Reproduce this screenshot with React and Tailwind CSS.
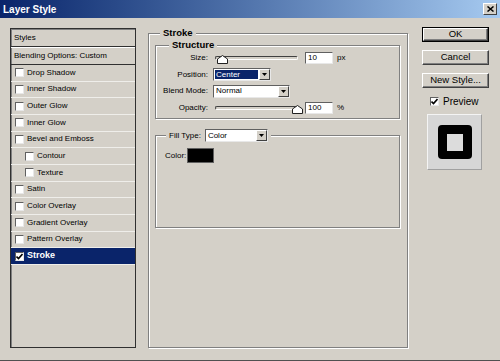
import React from 'react';

// Photoshop "Layer Style" dialog, Win2000 chrome

const STYLE_ROWS = [
    { name: 'Drop Shadow', level: 1 },
    { name: 'Inner Shadow', level: 1 },
    { name: 'Outer Glow', level: 1 },
    { name: 'Inner Glow', level: 1 },
    { name: 'Bevel and Emboss', level: 1 },
    { name: 'Contour', level: 2 },
    { name: 'Texture', level: 2 },
    { name: 'Satin', level: 1 },
    { name: 'Color Overlay', level: 1 },
    { name: 'Gradient Overlay', level: 1 },
    { name: 'Pattern Overlay', level: 1 },
    { name: 'Stroke', level: 1, checked: true, selected: true },
];

const Check = ({ checked }) => (
    <div className="w-[9px] h-[9px] shrink-0 bg-white border border-t-[#606060] border-l-[#606060] border-b-[#e8e8e8] border-r-[#e8e8e8] flex items-center justify-center">
        {checked && (
            <svg width="7" height="7" viewBox="0 0 7 7">
                <path d="M0.5 3.5 L2.5 5.5 L6.5 1" stroke="#000" strokeWidth="1.6" fill="none" />
            </svg>
        )}
    </div>
);

const Group = ({ legend, className, legendClass, children }) => (
    <div className={`relative border border-[#808080] shadow-[inset_1px_1px_0_#fff,1px_1px_0_#fff] ${className}`}>
        <div className={`absolute bg-[#d4d0c8] px-[3px] flex items-center ${legendClass}`}>{legend}</div>
        {children}
    </div>
);

const Arrow = () => (
    <div className="w-[11px] h-full shrink-0 bg-[#d4d0c8] border border-t-white border-l-white border-r-[#404040] border-b-[#404040] flex items-center justify-center">
        <svg width="5" height="3" viewBox="0 0 5 3">
            <path d="M0 0 H5 L2.5 3 Z" fill="#000" />
        </svg>
    </div>
);

const Dropdown = ({ value, highlight, className }) => (
    <div className={`h-[13px] bg-white border border-t-[#606060] border-l-[#606060] border-b-[#e8e8e8] border-r-[#e8e8e8] flex items-stretch ${className}`}>
        <div className="flex-1 flex items-center p-[1px]">
            <span className={`h-full w-full flex items-center pl-[1px] ${highlight ? 'bg-[#0a246a] text-white' : 'text-black'}`}>{value}</span>
        </div>
        <Arrow />
    </div>
);

const Slider = ({ pos }) => (
    <div className="relative w-[83px] h-[10px] flex items-center">
        <div className="w-full h-[4px] rounded-[2px] border border-t-[#404040] border-l-[#404040] border-b-white border-r-white bg-[#d4d0c8]" />
        <svg className="absolute top-[2px]" style={{ left: pos }} width="11" height="9" viewBox="0 0 11 9">
            <path d="M5.5 0.5 L10.5 4 V8.5 H0.5 V4 Z" fill="#fff" stroke="#202020" strokeWidth="1" />
        </svg>
    </div>
);

const Field = ({ value }) => (
    <div className="w-[28px] h-[12px] bg-white border border-t-[#606060] border-l-[#606060] border-b-[#e8e8e8] border-r-[#e8e8e8] flex items-center pl-[2px] text-black">
        {value}
    </div>
);

const Button = ({ children, isDefault }) => (
    <div className={`w-[67px] h-[15px] ${isDefault ? 'border border-black' : ''}`}>
        <div className="w-full h-full bg-[#d4d0c8] border border-t-white border-l-white border-r-[#404040] border-b-[#404040] shadow-[inset_-1px_-1px_0_#808080] flex items-center justify-center text-[9.5px] text-black">
            {children}
        </div>
    </div>
);

export default function App() {
    return (
        <div className="w-[500px] h-[361px] bg-[#d4d0c8] border-b border-[#505050] flex flex-col font-['Liberation_Sans',Arial,sans-serif] text-[8px] text-black overflow-hidden">
            {/* title bar */}
            <div className="h-[18px] shrink-0 bg-linear-to-r from-[#0a246a] to-[#a6caf0] flex items-center justify-between pl-[3px] pr-[3px]">
                <span className="text-white font-bold text-[10px]">Layer Style</span>
                <div className="w-[14px] h-[12px] bg-[#d4d0c8] border border-t-white border-l-white border-r-[#404040] border-b-[#404040] flex items-center justify-center">
                    <svg width="7" height="6" viewBox="0 0 7 6">
                        <path d="M0.5 0.5 L6.5 5.5 M6.5 0.5 L0.5 5.5" stroke="#000" strokeWidth="1.5" />
                    </svg>
                </div>
            </div>

            <div className="flex items-start">
                {/* styles list */}
                <div className="ml-[10px] mt-[10px] w-[126px] h-[320px] border border-[#303030] shadow-[inset_1px_1px_0_#808080] flex flex-col">
                    <div className="h-[18px] shrink-0 flex items-center pl-[3px] border-b border-[#303030] shadow-[0_1px_0_#fff]">Styles</div>
                    <div className="h-[17px] mt-[1px] shrink-0 flex items-center pl-[3px] border-b border-[#303030]">Blending Options: Custom</div>
                    {STYLE_ROWS.map((row) => (
                        <div
                            key={row.name}
                            className={`h-[16.67px] shrink-0 flex items-center gap-[3px] border-b border-[#efeeea] ${row.level === 2 ? 'pl-[14px]' : 'pl-[4px]'} ${row.selected ? 'bg-[#0a246a] text-white font-bold text-[9px]' : ''}`}
                        >
                            <Check checked={row.checked} />
                            <span>{row.name}</span>
                        </div>
                    ))}
                </div>

                {/* stroke panel */}
                <Group
                    className="ml-[12px] mt-[15px] w-[260px] h-[315px] flex flex-col"
                    legendClass="-top-[7px] left-[11px] h-[13px] font-bold text-[9.5px]"
                    legend="Stroke"
                >
                    <Group
                        className="ml-[6px] mt-[11px] w-[245px] h-[74px] flex flex-col pt-[4px]"
                        legendClass="-top-[7px] left-[13px] h-[13px] font-bold text-[9.5px]"
                        legend="Structure"
                    >
                        <div className="h-[16.5px] flex items-center">
                            <span className="w-[52px] text-right">Size:</span>
                            <div className="ml-[7px]"><Slider pos={2} /></div>
                            <div className="ml-[7px]"><Field value="10" /></div>
                            <span className="ml-[4px]">px</span>
                        </div>
                        <div className="h-[16.5px] flex items-center">
                            <span className="w-[52px] text-right">Position:</span>
                            <Dropdown className="ml-[5px] w-[58px]" value="Center" highlight />
                        </div>
                        <div className="h-[16.5px] flex items-center">
                            <span className="w-[52px] text-right">Blend Mode:</span>
                            <Dropdown className="ml-[5px] w-[77px]" value="Normal" />
                        </div>
                        <div className="h-[16.5px] flex items-center">
                            <span className="w-[52px] text-right">Opacity:</span>
                            <div className="ml-[7px]"><Slider pos={77} /></div>
                            <div className="ml-[7px]"><Field value="100" /></div>
                            <span className="ml-[4px]">%</span>
                        </div>
                    </Group>

                    <Group
                        className="ml-[6px] mt-[16px] w-[245px] h-[93px] pt-[12px] pl-[9px]"
                        legendClass="-top-[8px] left-[10px] h-[15px] gap-[4px]"
                        legend={
                            <>
                                <span>Fill Type:</span>
                                <Dropdown className="w-[63px]" value="Color" />
                            </>
                        }
                    >
                        <div className="flex items-center">
                            <span>Color:</span>
                            <div className="ml-[1px] w-[27px] h-[15px] bg-black border border-[#606060]" />
                        </div>
                    </Group>
                </Group>

                {/* buttons */}
                <div className="ml-[14px] mt-[9px] w-[67px] flex flex-col">
                    <Button isDefault>OK</Button>
                    <div className="mt-[8px]"><Button>Cancel</Button></div>
                    <div className="mt-[8px]"><Button>New Style...</Button></div>
                    <div className="mt-[8px] h-[11px] flex items-center pl-[8px] gap-[4px] text-[10px]">
                        <Check checked />
                        <span>Preview</span>
                    </div>
                    <div className="mt-[7px] ml-[5px] w-[55px] h-[56px] bg-[#d6d6d6] border border-t-[#f4f4f4] border-l-[#f4f4f4] border-r-[#a0a0a0] border-b-[#a0a0a0] flex items-center justify-center">
                        <div className="w-[34px] h-[34px] bg-black rounded-[4px] flex items-center justify-center">
                            <div className="w-[16px] h-[17px] bg-[#dcdcdc]" />
                        </div>
                    </div>
                </div>
            </div>
        </div>
    );
}
